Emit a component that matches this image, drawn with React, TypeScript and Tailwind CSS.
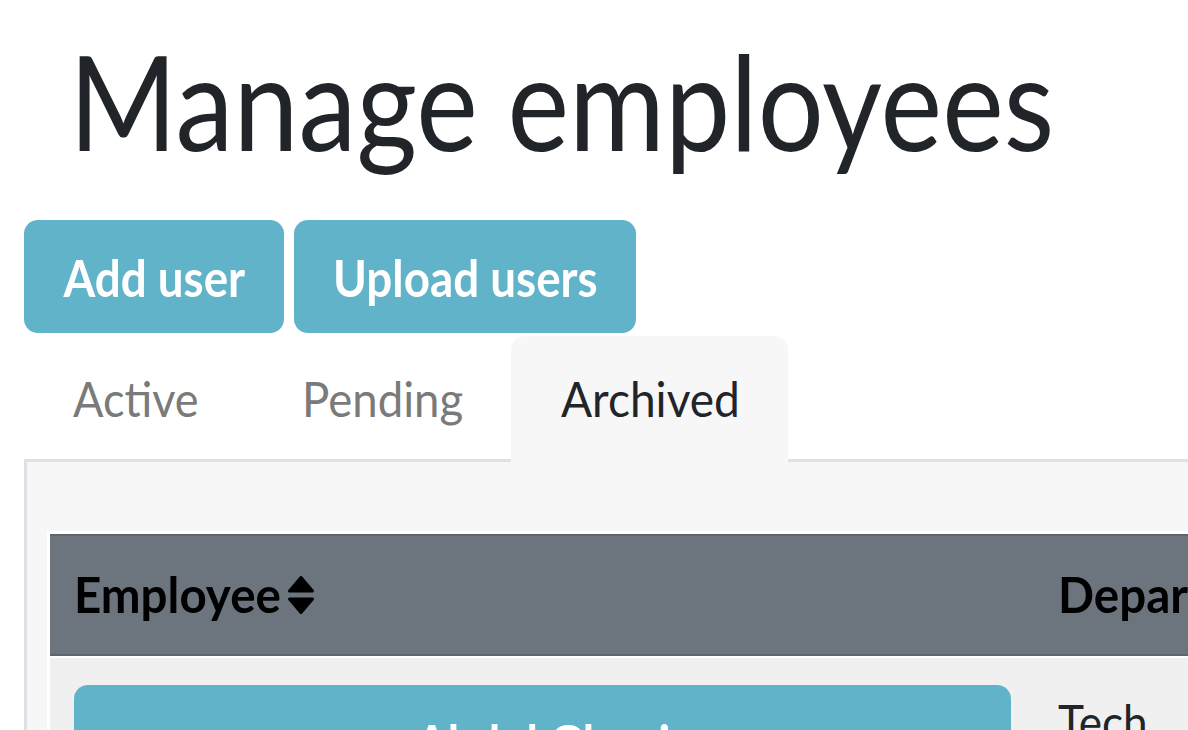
import React from "react";

function SortIcon() {
  return (
    <svg width="28" height="40" viewBox="0 0 28 40" className="shrink-0">
      <path
        d="M2.5 16 L14 2.5 L25.5 16 Z"
        fill="currentColor"
        stroke="currentColor"
        strokeWidth="3"
        strokeLinejoin="round"
      />
      <path
        d="M2.5 24 L14 37.5 L25.5 24 Z"
        fill="currentColor"
        stroke="currentColor"
        strokeWidth="3"
        strokeLinejoin="round"
      />
    </svg>
  );
}

export default function App() {
  return (
    <div className="w-[1188px] h-[730px] overflow-hidden bg-white font-['Lato',sans-serif] text-[#212529]">
      <div className="pl-[24px]">
        <h1 className="text-[131px] leading-[1.2] font-normal pt-[22px] pl-[45px] whitespace-nowrap">
          <span className="inline-block origin-left scale-x-[0.89]">Manage employees</span>
        </h1>
        <div className="flex gap-[10px] mt-[41px]">
          <button className="w-[260px] h-[113px] rounded-[14px] bg-[#61b3c9] text-white text-[52px] font-bold leading-none flex items-center justify-center whitespace-nowrap">
            <span className="inline-block scale-x-[0.88]">Add user</span>
          </button>
          <button className="w-[342px] h-[113px] rounded-[14px] bg-[#61b3c9] text-white text-[52px] font-bold leading-none flex items-center justify-center whitespace-nowrap">
            <span className="inline-block scale-x-[0.88]">Upload users</span>
          </button>
        </div>
        <div className="flex mt-[3px] relative z-10 -mb-[3px]">
          <div className="w-[228px] h-[126px] pl-[49px] flex items-center text-[49px] text-[#7a7a7a] rounded-t-[14px] whitespace-nowrap">
            <span className="inline-block origin-left scale-x-[0.92]">Active</span>
          </div>
          <div className="w-[259px] h-[126px] pl-[50px] flex items-center text-[49px] text-[#7a7a7a] rounded-t-[14px] whitespace-nowrap">
            <span className="inline-block origin-left scale-x-[0.93]">Pending</span>
          </div>
          <div className="w-[277px] h-[126px] pl-[50px] flex items-center text-[49px] text-[#212529] bg-[#f7f7f7] rounded-t-[14px] whitespace-nowrap">
            <span className="inline-block origin-left scale-x-[0.94]">Archived</span>
          </div>
        </div>
        <div className="border-t-[3px] border-l-[3px] border-[#dee2e6] bg-[#f7f7f7] pt-[69px] pl-[20px] h-[400px]">
          <div className="border-t-[3px] border-l-[3px] border-white w-[1200px]">
            <div className="flex h-[122px] items-center bg-[#6c757d] border-y-[2px] border-[#5d656d] text-black font-bold text-[49px] whitespace-nowrap">
              <div className="w-[1008px] shrink-0 pl-[24px] flex items-center">
                <span className="inline-block origin-left scale-x-[0.97] w-[204px]">Employee</span>
                <span className="ml-[9px] flex items-center text-black">
                  <SortIcon />
                </span>
              </div>
              <div className="shrink-0">
                <span className="inline-block origin-left scale-x-[0.97]">Department</span>
              </div>
            </div>
            <div className="flex bg-[#f0f0f0] pt-[27px] border-t-[2px] border-white">
              <div className="w-[1008px] shrink-0 pl-[24px]">
                <div className="w-[937px] h-[113px] rounded-[14px] bg-[#61b3c9] text-white text-[52px] font-bold flex items-center justify-center whitespace-nowrap">
                  <span className="inline-block scale-x-[0.89]">Abdul Ghani</span>
                </div>
              </div>
              <div className="shrink-0 text-[49px] leading-[1.5] whitespace-nowrap">
                <span className="inline-block origin-left scale-x-[0.9]">Tech</span>
              </div>
            </div>
          </div>
        </div>
      </div>
    </div>
  );
}
